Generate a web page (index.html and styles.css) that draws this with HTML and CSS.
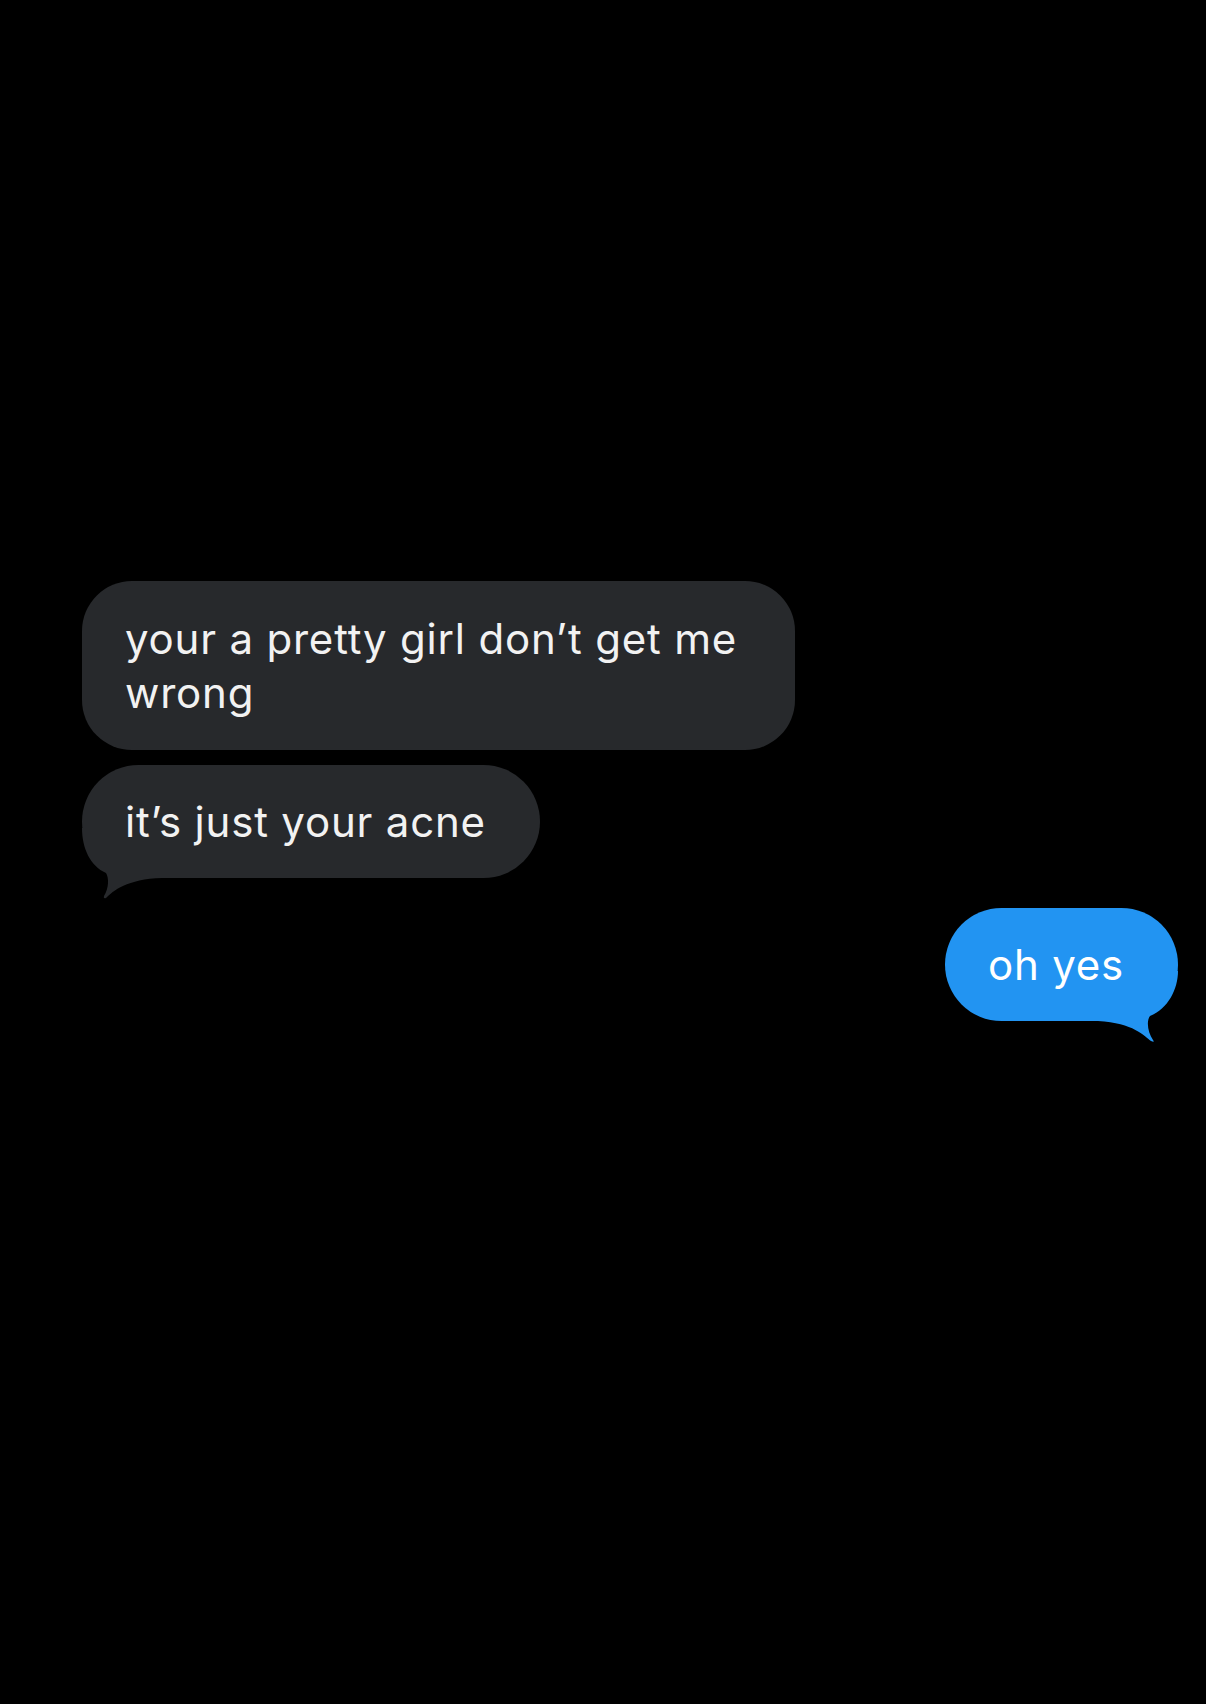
FILE: index.html
```html
<!DOCTYPE html>
<html>
<head>
<meta charset="utf-8">
<link rel="stylesheet" href="styles.css">
</head>
<body>
<main class="thread">
  <div class="row row-in">
    <div class="bubble bubble-in wide"><span class="text">your a pretty girl don’t get me wrong</span></div>
  </div>
  <div class="row row-in gap-small">
    <div class="bubble bubble-in"><span class="text">it’s just your acne</span>
      <svg class="tail tail-in" width="80" height="72" viewBox="0 0 80 72"><path d="M0 0 C0 20 8 38 24 45 C27 50 27 60 22 68 Q21 71 24 70 C31 63 45 51 80 50 L80 0 Z" fill="#27292c"/></svg>
    </div>
  </div>
  <div class="row row-out">
    <div class="bubble bubble-out"><span class="text">oh yes</span>
      <svg class="tail tail-out" width="80" height="72" viewBox="0 0 80 72"><path d="M80 0 C80 18 70 38 52 45 C48 50 50 62 55 69 Q57 72 53 70 C46 65 36 52 0 50 L0 0 Z" fill="#2294f2"/></svg>
    </div>
  </div>
</main>
</body>
</html>
```
FILE: styles.css
```css
html, body {
  margin: 0;
  background: #000;
}
body {
  width: 1206px;
  height: 1704px;
  overflow: hidden;
  font-family: "Inter", "Liberation Sans", sans-serif;
}
.thread {
  display: flex;
  flex-direction: column;
  padding: 581px 28px 0 82px;
}
.row {
  display: flex;
}
.row-in { justify-content: flex-start; }
.row-out { justify-content: flex-end; margin-top: 30px; }
.gap-small { margin-top: 15px; }
.bubble {
  position: relative;
  box-sizing: border-box;
  font-size: 42px;
  letter-spacing: 0.8px;
  line-height: 54px;
  color: #f2f2f2;
  padding: 30px 54px 29px 43px;
  border-radius: 57px;
}
.text {
  position: relative;
  z-index: 1;
}
.bubble-in { background: #27292c; }
.wide {
  width: 713px;
  border-radius: 50px;
  padding-top: 31px;
  padding-right: 44px;
  padding-bottom: 30px;
}
.bubble-out { background: #2294f2; color: #fff; }
.tail { position: absolute; bottom: -22px; }
.tail-in { left: 0; }
.tail-out { right: 0; }
```
